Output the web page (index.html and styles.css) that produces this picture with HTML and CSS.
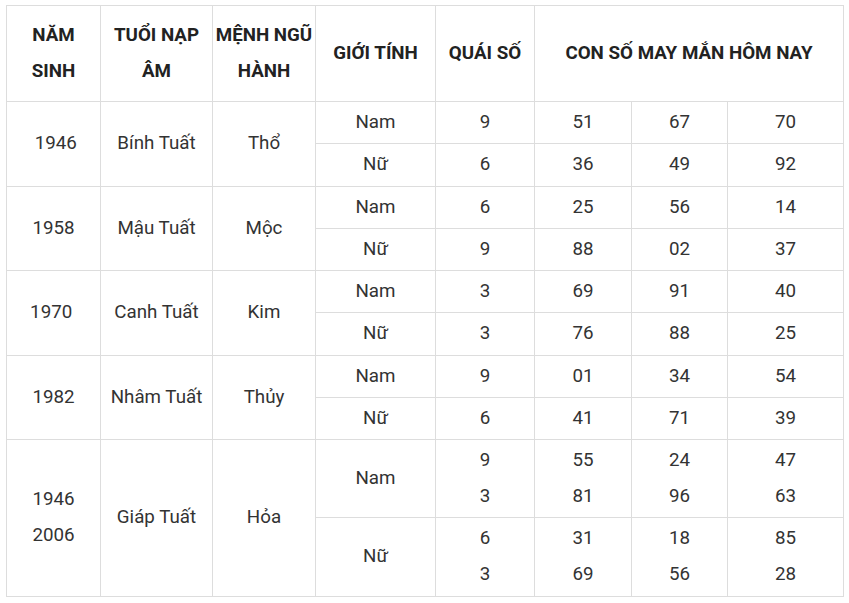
FILE: index.html
```html
<!DOCTYPE html>
<html lang="vi">
<head>
<meta charset="utf-8">
<link rel="stylesheet" href="styles.css">
</head>
<body>
<table class="lucky">
<colgroup>
<col class="c1"><col class="c2"><col class="c3"><col class="c4"><col class="c5"><col class="c6"><col class="c7"><col class="c8">
</colgroup>
<thead>
<tr>
<th>NĂM<br>SINH</th>
<th>TUỔI NẠP<br>ÂM</th>
<th>MỆNH NGŨ<br>HÀNH</th>
<th>GIỚI TÍNH</th>
<th>QUÁI SỐ</th>
<th colspan="3">CON SỐ MAY MẮN HÔM NAY</th>
</tr>
</thead>
<tbody>
<tr><td rowspan="2">&nbsp;1946</td><td rowspan="2">Bính Tuất</td><td rowspan="2">Thổ</td><td>Nam</td><td>9</td><td>51</td><td>67</td><td>70</td></tr>
<tr><td>Nữ</td><td>6</td><td>36</td><td>49</td><td>92</td></tr>
<tr><td rowspan="2">1958</td><td rowspan="2">Mậu Tuất</td><td rowspan="2">Mộc</td><td>Nam</td><td>6</td><td>25</td><td>56</td><td>14</td></tr>
<tr><td>Nữ</td><td>9</td><td>88</td><td>02</td><td>37</td></tr>
<tr><td rowspan="2">1970&nbsp;</td><td rowspan="2">Canh Tuất</td><td rowspan="2">Kim</td><td>Nam</td><td>3</td><td>69</td><td>91</td><td>40</td></tr>
<tr><td>Nữ</td><td>3</td><td>76</td><td>88</td><td>25</td></tr>
<tr><td rowspan="2">1982</td><td rowspan="2">Nhâm Tuất</td><td rowspan="2">Thủy</td><td>Nam</td><td>9</td><td>01</td><td>34</td><td>54</td></tr>
<tr><td>Nữ</td><td>6</td><td>41</td><td>71</td><td>39</td></tr>
<tr><td rowspan="2">1946<br>2006</td><td rowspan="2">Giáp Tuất</td><td rowspan="2">Hỏa</td><td>Nam</td><td>9<br>3</td><td>55<br>81</td><td>24<br>96</td><td>47<br>63</td></tr>
<tr><td>Nữ</td><td>6<br>3</td><td>31<br>69</td><td>18<br>56</td><td>85<br>28</td></tr>
</tbody>
</table>
</body>
</html>
```

FILE: styles.css
```css
html, body {
  margin: 0;
  background: #ffffff;
}
body {
  padding: 5px 0 0 6px;
  font-family: Roboto, "Liberation Sans", sans-serif;
}
.lucky {
  border-collapse: collapse;
  table-layout: fixed;
  width: 837px;
  font-size: 18.75px;
  line-height: 36px;
  color: #333333;
}
.c1 { width: 94px; }
.c2 { width: 112px; }
.c3 { width: 103px; }
.c4 { width: 120px; }
.c5 { width: 99px; }
.c6 { width: 97px; }
.c7 { width: 96px; }
.c8 { width: 116px; }
.lucky th,
.lucky td {
  border: 1px solid #dddddd;
  text-align: center;
  vertical-align: middle;
  padding: 2px 0 3.25px;
}
.lucky th {
  font-weight: 700;
  color: #222222;
  padding: 11px 0 12px;
  height: 72px;
}
.lucky td {
  font-weight: 400;
}
```
